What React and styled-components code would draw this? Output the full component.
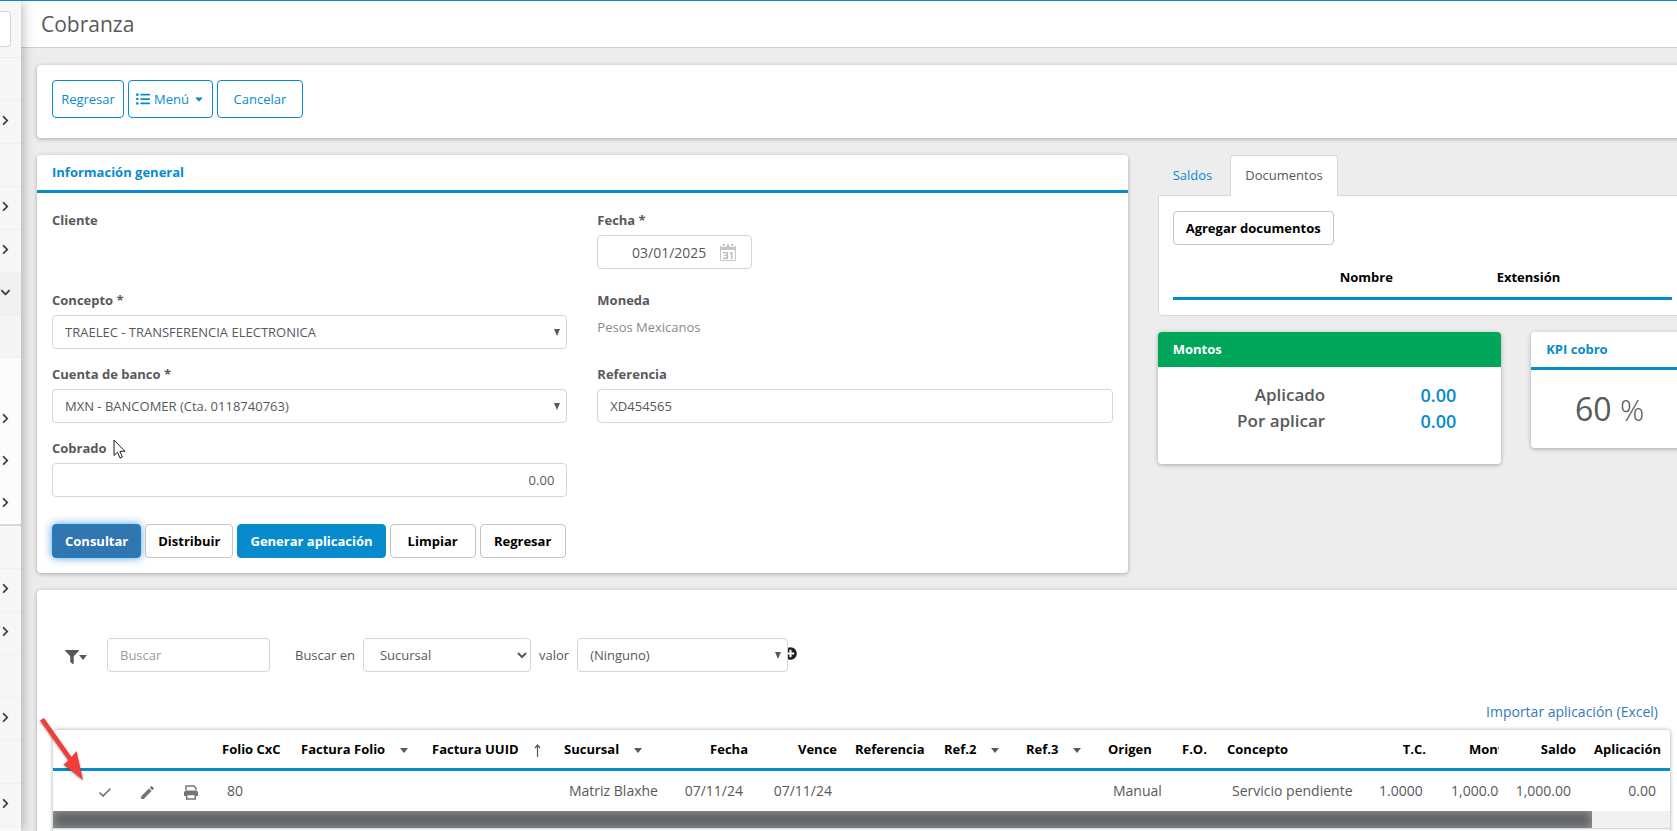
import { useState } from "react";
import styled, { createGlobalStyle, css } from "styled-components";
import {
    FaChevronRight,
    FaChevronDown,
    FaCaretDown,
    FaFilter,
    FaListUl,
    FaPlusCircle,
} from "react-icons/fa";
import { MdEdit } from "react-icons/md";

const blue = "#088bcd";
const gray = "#58595b";

const menuItems = [
    { icon: "none" },
    { icon: "right" },
    { icon: "none" },
    { icon: "right" },
    { icon: "right" },
    { icon: "down" },
    { icon: "none", open: true },
    { icon: "none", sub: true },
    { icon: "right", sub: true },
    { icon: "right", sub: true },
    { icon: "right", sub: true, last: true },
    { icon: "none" },
    { icon: "right" },
    { icon: "right" },
    { icon: "none" },
    { icon: "right" },
    { icon: "none" },
    { icon: "right" },
    { icon: "none" },
];

const columns = [
    { id: "pad", width: 30 },
    { id: "check", width: 43 },
    { id: "edit", width: 43 },
    { id: "print", width: 44 },
    { id: "folio", title: "Folio CxC", width: 79 },
    { id: "facturaFolio", title: "Factura Folio", width: 131, menu: "caret" },
    { id: "facturaUuid", title: "Factura UUID", width: 132, menu: "arrow" },
    { id: "sucursal", title: "Sucursal", width: 105, menu: "caret" },
    { id: "fecha", title: "Fecha", width: 97, right: true },
    { id: "vence", title: "Vence", width: 89, right: true },
    { id: "referencia", title: "Referencia", width: 89 },
    { id: "ref2", title: "Ref.2", width: 82, menu: "caret" },
    { id: "ref3", title: "Ref.3", width: 82, menu: "caret" },
    { id: "origen", title: "Origen", width: 74 },
    { id: "fo", title: "F.O.", width: 45 },
    { id: "concepto", title: "Concepto" },
    { id: "tc", title: "T.C.", width: 70, right: true },
    { id: "monto", title: "Monto", width: 64, right: true, cut: true },
    { id: "saldo", title: "Saldo", width: 86, right: true },
    { id: "aplicacion", title: "Aplicación", width: 85, right: true },
];

const row = {
    folio: "80",
    sucursal: "Matriz Blaxhe",
    fecha: "07/11/24",
    vence: "07/11/24",
    origen: "Manual",
    concepto: "Servicio pendiente",
    tc: "1.0000",
    monto: "1,000.00",
    saldo: "1,000.00",
    aplicacion: "0.00",
};

function CalendarIcon() {
    return (
        <svg width="16" height="17" viewBox="0 0 16 17">
            <path d="M1 2h14l1 1v13l-1 1H1l-1-1V3z" fill="#c6c6c6" />
            <path d="M2 0h4v3H2zM10 0h4v3h-4z" fill="#fff" />
            <path d="M3 0h2v2H3zM7 0h2v2H7zM11 0h2v2h-2z" fill="#c6c6c6" />
            <path d="M1 6h14v10H1z" fill="#fff" />
            <path d="M3 8h5v7H3v-1.500h3.500V12H4v-1h2.500V9.500H3zM9.500 9l2-1h1v7H11V10H9.500z" fill="#bdbdbd" />
        </svg>
    );
}

function PrintIcon() {
    return (
        <svg width="14" height="15" viewBox="0 0 14 15">
            <path d="M2 5V1h8l2 2v2" fill="none" stroke="#757575" strokeWidth="1.500" />
            <path d="M1.500 5.500h11L14 7v4h-2V9.500H2V11H0V7z" fill="#757575" />
            <path d="M2.700 9.500h8.600v4.500H2.700z" fill="#fff" stroke="#757575" strokeWidth="1.500" />
        </svg>
    );
}

function CheckIcon() {
    return (
        <svg width="14" height="11" viewBox="0 0 14 11">
            <path d="M1.500 5.500L5 9l7.500-7.500" fill="none" stroke="#757575" strokeWidth="1.700" />
        </svg>
    );
}

function ArrowUpIcon() {
    return (
        <svg width="7" height="13" viewBox="0 0 7 13">
            <path d="M3.500 1v12M1 4l2.500-3L6 4" fill="none" stroke={gray} strokeWidth="1.200" />
        </svg>
    );
}

function CaretIcon() {
    return (
        <svg width="8" height="5" viewBox="0 0 8 5">
            <path d="M0 0h8L4 5z" fill={gray} />
        </svg>
    );
}

function ListSelect({ id, value, width }) {
    return (
        <SelectWrap $width={width}>
            <PlainSelect id={id} defaultValue={value}>
                <option>{value}</option>
            </PlainSelect>
            <Triangle viewBox="0 0 6 7">
                <path d="M0 0h6L3 7z" fill={gray} />
            </Triangle>
        </SelectWrap>
    );
}

function Sidebar() {
    return (
        <Side>
            <SearchBox>
                <SideInput type="text" aria-label="Buscar en el menú" />
            </SearchBox>
            {menuItems.map((item, i) => (
                <SideItem
                    key={i}
                    type="button"
                    aria-label="Abrir menú"
                    $sub={item.sub}
                    $last={item.last}
                    $active={item.icon === "down"}
                    $open={item.open}
                >
                    {item.icon === "right" && <FaChevronRight size={11} />}
                    {item.icon === "down" && <FaChevronDown size={11} />}
                </SideItem>
            ))}
        </Side>
    );
}

function GeneralInfo() {
    const [date, setDate] = useState("03/01/2025");
    const [reference, setReference] = useState("XD454565");
    const [charged, setCharged] = useState("0.00");

    return (
        <Panel>
            <PanelTitle>Información general</PanelTitle>
            <Form onSubmit={(e) => e.preventDefault()}>
                <Fields>
                    <Field $first>
                        <Label as="span">Cliente</Label>
                    </Field>
                    <Field $first>
                        <Label htmlFor="fecha">Fecha *</Label>
                        <DateBox>
                            <DateInput id="fecha" value={date} onChange={(e) => setDate(e.target.value)} />
                            <IconButton type="button" aria-label="Calendario">
                                <CalendarIcon />
                            </IconButton>
                        </DateBox>
                    </Field>
                    <Field>
                        <Label htmlFor="concepto">Concepto *</Label>
                        <ListSelect id="concepto" value="TRAELEC - TRANSFERENCIA ELECTRONICA" />
                    </Field>
                    <Field>
                        <Label as="span">Moneda</Label>
                        <Static>Pesos Mexicanos</Static>
                    </Field>
                    <Field>
                        <Label htmlFor="cuenta">Cuenta de banco *</Label>
                        <ListSelect id="cuenta" value="MXN - BANCOMER (Cta. 0118740763)" />
                    </Field>
                    <Field>
                        <Label htmlFor="referencia">Referencia</Label>
                        <Input id="referencia" value={reference} onChange={(e) => setReference(e.target.value)} />
                    </Field>
                    <Field>
                        <Label htmlFor="cobrado">
                            Cobrado
                            <Pointer viewBox="0 0 13 20">
                                <path
                                    d="M1 1v15.500l3.500-3.300 2.500 5.800 2.400-1-2.500-5.700h5z"
                                    fill="#fff"
                                    stroke="#1c1c2b"
                                />
                            </Pointer>
                        </Label>
                        <Input id="cobrado" $right value={charged} onChange={(e) => setCharged(e.target.value)} />
                    </Field>
                </Fields>
                <Actions>
                    <Button type="submit" $variant="focused">Consultar</Button>
                    <Button type="button">Distribuir</Button>
                    <Button type="button" $variant="primary">Generar aplicación</Button>
                    <Button type="button">Limpiar</Button>
                    <Button type="button">Regresar</Button>
                </Actions>
            </Form>
        </Panel>
    );
}

function SidePanels() {
    return (
        <div>
            <Tabs role="tablist">
                <Tab type="button" role="tab">Saldos</Tab>
                <Tab type="button" role="tab" aria-selected="true" $active>Documentos</Tab>
            </Tabs>
            <TabContent>
                <Button type="button">Agregar documentos</Button>
                <DocsTable>
                    <thead>
                        <tr>
                            <td />
                            <th>Nombre</th>
                            <th>Extensión</th>
                            <td />
                        </tr>
                    </thead>
                </DocsTable>
            </TabContent>
            <Grid $cols={3}>
                <Span $n={2}>
                    <Panel>
                        <PanelTitle $green>Montos</PanelTitle>
                        <Amounts>
                            <dt>Aplicado</dt>
                            <dd>0.00</dd>
                            <dt>Por aplicar</dt>
                            <dd>0.00</dd>
                        </Amounts>
                    </Panel>
                </Span>
                <Span $n={1}>
                    <Panel>
                        <PanelTitle>KPI cobro</PanelTitle>
                        <Kpi>
                            60 <small>%</small>
                        </Kpi>
                    </Panel>
                </Span>
            </Grid>
        </div>
    );
}

function Documents() {
    const icons = {
        check: <CheckIcon />,
        edit: <MdEdit size={17} />,
        print: <PrintIcon />,
    };
    const names = { check: "Aplicar", edit: "Editar", print: "Imprimir" };

    return (
        <ListPanel>
            <RedArrow viewBox="0 0 44 64">
                <path d="M0 2.500L4 0 31.500 39l5-6L43 62 23.500 46.500l5-4z" fill="#f23d3a" />
            </RedArrow>
            <Filters>
                <FilterButton type="button" aria-label="Filtros">
                    <FaFilter size={14} />
                    <CaretIcon />
                </FilterButton>
                <SearchInput type="text" placeholder="Buscar" aria-label="Buscar" />
                <label htmlFor="buscarEn">Buscar en</label>
                <NativeSelect id="buscarEn" defaultValue="Sucursal">
                    <option>Sucursal</option>
                </NativeSelect>
                <label htmlFor="valor">valor</label>
                <ListSelect id="valor" value="(Ninguno)" width={211} />
                <AddButton type="button" aria-label="Agregar filtro">
                    <FaPlusCircle size={13} />
                </AddButton>
            </Filters>
            <LinkRow>
                <a href="#importar">Importar aplicación (Excel)</a>
            </LinkRow>
            <TableBox>
                <Table>
                    <colgroup>
                        {columns.map((c) => (
                            <Col key={c.id} $width={c.width} />
                        ))}
                    </colgroup>
                    <thead>
                        <tr>
                            {columns.map((c) => (
                                <Th key={c.id} $right={c.right} $cut={c.cut}>
                                    {c.title}
                                    {c.menu === "caret" && <CaretIcon />}
                                    {c.menu === "arrow" && <ArrowUpIcon />}
                                </Th>
                            ))}
                        </tr>
                    </thead>
                    <tbody>
                        <tr>
                            {columns.map((c) => (
                                <Td key={c.id} $right={c.right} $cut={c.cut} $icon={!!icons[c.id]}>
                                    {icons[c.id] ? (
                                        <IconButton type="button" aria-label={names[c.id]}>
                                            {icons[c.id]}
                                        </IconButton>
                                    ) : (
                                        row[c.id]
                                    )}
                                </Td>
                            ))}
                        </tr>
                    </tbody>
                </Table>
                <ScrollTrack>
                    <ScrollThumb />
                </ScrollTrack>
                <TableFooter />
            </TableBox>
        </ListPanel>
    );
}

export default function App() {
    return (
        <Page>
            <GlobalStyle />
            <Sidebar />
            <Content>
                <Header>Cobranza</Header>
                <Main>
                    <Toolbar>
                        <OutlineButton type="button">Regresar</OutlineButton>
                        <OutlineButton type="button">
                            <FaListUl size={14} />
                            Menú
                            <FaCaretDown size={12} />
                        </OutlineButton>
                        <OutlineButton type="button" $wide>Cancelar</OutlineButton>
                    </Toolbar>
                    <Grid $cols={12}>
                        <Span $n={8}>
                            <GeneralInfo />
                        </Span>
                        <Span $n={4}>
                            <SidePanels />
                        </Span>
                    </Grid>
                    <Documents />
                </Main>
            </Content>
        </Page>
    );
}

const GlobalStyle = createGlobalStyle`
* {
    box-sizing: border-box;
}
body {
    margin: 0;
    background: #ededed;
    font-family: "Open Sans", "Noto Sans", sans-serif;
    font-size: 14px;
    line-height: 20px;
    color: ${gray};
}
button, input, select {
    font-family: inherit;
    color: inherit;
}
`;

const Page = styled.div`
    display: flex;
    height: 100vh;
    overflow: hidden;
    border-top: 1px solid ${blue};
`;

const Side = styled.nav`
    flex: 0 0 21px;
    background: #f7f7f7;
    box-shadow: 0 0 14px rgba(0, 0, 0, 0.35);
    z-index: 2;
`;

const SearchBox = styled.div`
    height: 57px;
    padding: 10px 10px 0 0;
    border-bottom: 1px solid #eeeeee;
`;

const SideInput = styled.input`
    display: block;
    width: 100%;
    height: 36px;
    padding: 0;
    background: #fff;
    border: 1px solid #d5d5d5;
    border-left: none;
    border-radius: 0 4px 4px 0;
`;

const SideItem = styled.button`
    display: flex;
    align-items: center;
    width: 100%;
    height: ${({ $sub, $open }) => ($sub || $open ? 42 : 43)}px;
    padding: 0 0 4px;
    border: none;
    border-bottom: 1px solid #efefef;
    background: ${({ $sub, $active, $open }) => ($sub ? "#fcfcfc" : $active ? "#f1f1f1" : $open ? "#f5f5f5" : "#f7f7f7")};
    color: #3c3c3c;

    svg {
        flex-shrink: 0;
    }
    ${({ $sub }) => $sub && css`border-bottom-color: #fcfcfc;`}
    ${({ $last }) => $last && css`border-bottom: 2px solid #d8d8d8;`}
`;

const Content = styled.div`
    flex: 1;
    min-width: 0;
`;

const Header = styled.h1`
    margin: 0;
    height: 47px;
    padding: 0 20px;
    border-bottom: 1px solid #d0d0d0;
    background: #fff;
    font-size: 21px;
    font-weight: 400;
    line-height: 47px;
`;

/* the page is a little wider than the window */
const Main = styled.main`
    display: flex;
    flex-direction: column;
    gap: 17px;
    margin-right: -11px;
    padding: 17px 0 0 16px;
`;

const Panel = styled.section`
    background: #fff;
    border-radius: 4px;
    box-shadow: 0 1px 4px rgba(0, 0, 0, 0.3);
`;

const Toolbar = styled(Panel)`
    display: flex;
    gap: 4px;
    padding: 15px 15px 20px;
`;

const OutlineButton = styled.button`
    display: flex;
    align-items: center;
    justify-content: center;
    gap: 4px;
    height: 38px;
    min-width: ${({ $wide }) => ($wide ? 86 : 72)}px;
    padding: 0 7px;
    border: 1px solid ${blue};
    border-radius: 4px;
    background: #fff;
    color: ${blue};
    font-size: 13px;
`;

const Grid = styled.div`
    display: grid;
    grid-template-columns: repeat(${({ $cols }) => $cols}, minmax(0, 1fr));
    column-gap: 30px;
    align-items: start;
`;

const Span = styled.div`
    grid-column: span ${({ $n }) => $n};
`;

const PanelTitle = styled.h2`
    margin: 0;
    height: ${({ $green }) => ($green ? 35 : 38)}px;
    padding: 7px 15px;
    border-bottom: ${({ $green }) => ($green ? "none" : `3px solid ${blue}`)};
    border-radius: 4px 4px 0 0;
    background: ${({ $green }) => ($green ? "#00a65a" : "#fff")};
    color: ${({ $green }) => ($green ? "#fff" : blue)};
    font-size: 13px;
    font-weight: 700;
`;

const Form = styled.form`
    padding: 17px 15px 15px;
`;

const Fields = styled.div`
    display: grid;
    grid-template-columns: 1fr 1fr;
    gap: 15px 30px;
`;

const Field = styled.div`
    display: flex;
    flex-direction: column;
    gap: 5px;
    min-height: ${({ $first }) => ($first ? 65 : 59)}px;
`;

const Label = styled.label`
    position: relative;
    align-self: flex-start;
    font-size: 13px;
    font-weight: 700;
`;

const Static = styled.p`
    margin: 2px 0 0;
    font-size: 13px;
    color: #8a8a8a;
`;

const Pointer = styled.svg`
    position: absolute;
    top: 1px;
    left: 100%;
    width: 13px;
    height: 20px;
    margin-left: 6px;
`;

const controlStyle = css`
    width: 100%;
    height: 34px;
    padding: 0 12px;
    border: 1px solid #d5d5d5;
    border-radius: 4px;
    background: #fff;
    font-size: 13px;
`;

const Input = styled.input`
    ${controlStyle}
    text-align: ${({ $right }) => ($right ? "right" : "left")};
`;

const SelectWrap = styled.div`
    position: relative;
    z-index: 1;
    width: ${({ $width }) => ($width ? `${$width}px` : "100%")};
`;

const PlainSelect = styled.select`
    ${controlStyle}
    display: block;
    appearance: none;
`;

const Triangle = styled.svg`
    position: absolute;
    top: 14px;
    right: 7px;
    width: 6px;
    height: 7px;
    pointer-events: none;
`;

const DateBox = styled.div`
    display: flex;
    align-items: center;
    width: 155px;
    height: 34px;
    padding-right: 15px;
    border: 1px solid #d5d5d5;
    border-radius: 4px;
`;

const DateInput = styled.input`
    flex: 1;
    min-width: 0;
    padding: 0 14px 0 0;
    border: none;
    background: none;
    font-size: 14px;
    text-align: right;
`;

const IconButton = styled.button`
    display: inline-flex;
    padding: 0;
    border: none;
    background: none;
    color: #757575;
    vertical-align: middle;
`;

const Actions = styled.div`
    display: flex;
    gap: 4px;
    margin-top: 27px;
`;

const Button = styled.button`
    height: 34px;
    min-width: 86px;
    padding: 0 12px;
    border: 1px solid #c4c4c4;
    border-radius: 4px;
    background: #fff;
    color: #000;
    font-size: 13px;
    font-weight: 700;

    ${({ $variant }) => $variant === "primary" && css`
        border-color: ${blue};
        background: ${blue};
        color: #fff;
    `}
    ${({ $variant }) => $variant === "focused" && css`
        border-color: ${blue};
        background: #3276b1;
        color: #fff;
        box-shadow: 0 0 8px rgba(50, 130, 210, 0.8);
    `}
`;

const Tabs = styled.div`
    display: flex;
`;

const Tab = styled.button`
    height: 41px;
    margin-bottom: -1px;
    padding: 0 14px 3px;
    border: 1px solid transparent;
    border-bottom: none;
    border-radius: 4px 4px 0 0;
    background: none;
    color: ${blue};
    font-size: 13px;
    z-index: 1;

    &:first-child {
        margin-right: 3px;
    }
    ${({ $active }) => $active && css`
        border-color: #d9d9d9;
        background: #fff;
        color: ${gray};
    `}
`;

const TabContent = styled.div`
    margin-bottom: 16px;
    padding: 15px 15px 15px 14px;
    border: 1px solid #d9d9d9;
    border-radius: 0 0 4px 4px;
    background: #fff;
`;

const DocsTable = styled.table`
    width: 100%;
    margin-top: 13px;
    border-collapse: collapse;
    table-layout: fixed;

    th, td {
        height: 40px;
        padding: 0 9px;
        border-bottom: 3px solid ${blue};
        color: #000;
        font-size: 13px;
        text-align: left;
    }
    td:first-child {
        width: 158px;
    }
    th {
        width: 157px;
    }
`;

const Amounts = styled.dl`
    display: grid;
    grid-template-columns: 1fr 131px 30px;
    margin: 0;
    padding: 15px 15px 30px;
    font-size: 17px;
    font-weight: 600;
    line-height: 26px;
    text-align: right;

    dt {
        grid-column: 1;
    }
    dd {
        margin: 0;
        color: ${blue};
        font-size: 18px;
    }
`;

const Kpi = styled.p`
    margin: 0;
    padding: 19px 0 18px;
    font-size: 32px;
    line-height: 40px;
    text-align: center;

    small {
        font-size: 30px;
        font-weight: 300;
    }
`;

const ListPanel = styled(Panel)`
    position: relative;
    padding: 48px 18px 0 16px;
`;

const RedArrow = styled.svg`
    position: absolute;
    top: 128px;
    left: 3px;
    width: 44px;
    height: 64px;
    filter: drop-shadow(0 1px 1px rgba(0, 0, 0, 0.4));
`;

const Filters = styled.div`
    display: flex;
    align-items: center;
    gap: 8px;
    font-size: 13px;
`;

const FilterButton = styled.button`
    display: flex;
    align-items: center;
    margin: 4px 12px 0 12px;
    padding: 0;
    border: none;
    background: none;
`;

const SearchInput = styled.input`
    ${controlStyle}
    width: 163px;
    margin-right: 17px;

    &::placeholder {
        color: #9a9a9a;
    }
`;

const NativeSelect = styled.select`
    ${controlStyle}
    width: 168px;
`;

const AddButton = styled.button`
    display: flex;
    margin: -4px 0 0 -12px;
    padding: 0;
    border: none;
    background: none;
    color: #222;
`;

const LinkRow = styled.div`
    display: flex;
    justify-content: flex-end;
    padding: 30px 12px 8px;

    a {
        color: #337ab7;
        text-decoration: none;
    }
`;

const TableBox = styled.div`
    border-radius: 4px 4px 0 0;
    box-shadow: 0 0 4px rgba(0, 0, 0, 0.35);
    overflow: hidden;
`;

const Table = styled.table`
    width: 100%;
    border-collapse: collapse;
    table-layout: fixed;
`;

const Col = styled.col`
    width: ${({ $width }) => ($width ? `${$width}px` : "auto")};
`;

const Th = styled.th`
    height: 39px;
    padding: 0 9px;
    border-bottom: 3px solid ${blue};
    color: #000;
    font-size: 13px;
    font-weight: 700;
    text-align: ${({ $right }) => ($right ? "right" : "left")};
    white-space: nowrap;

    svg {
        margin-left: 15px;
        vertical-align: middle;
    }
    ${({ $cut }) => $cut && css`
        padding: 0 0 0 34px;
        overflow: hidden;
        text-align: left;
    `}
`;

const Td = styled.td`
    height: 42px;
    padding: 0 ${({ $icon }) => ($icon ? 0 : 14)}px;
    text-align: ${({ $right, $icon }) => ($icon ? "center" : $right ? "right" : "left")};
    white-space: nowrap;

    ${({ $cut }) => $cut && css`
        padding: 0 0 0 16px;
        overflow: hidden;
        text-align: left;
    `}
`;

const ScrollTrack = styled.div`
    height: 17px;
    background: #f1f1f1;
`;

const ScrollThumb = styled.div`
    width: calc(100% - 78px);
    height: 100%;
    background: #5f6466;
    box-shadow: inset 0 0 10px #a0a0a0;
`;

const TableFooter = styled.div`
    height: 20px;
    border-top: 1px solid #d5d5d5;
    background: #f7f7f7;
`;
